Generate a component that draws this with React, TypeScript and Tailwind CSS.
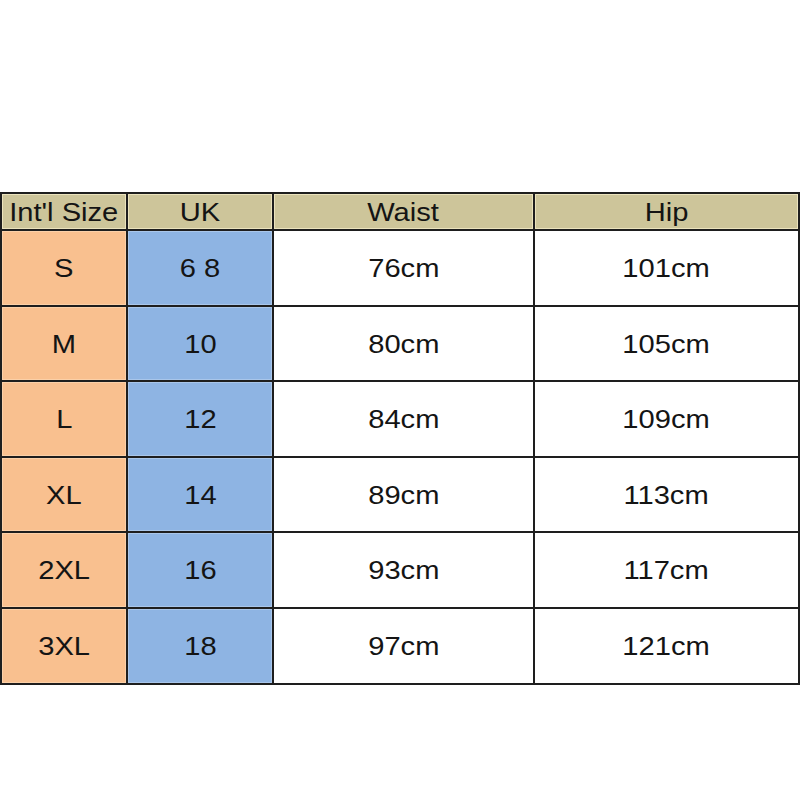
import React from "react";

const rows = [
  ["S", "6 8", "76cm", "101cm"],
  ["M", "10", "80cm", "105cm"],
  ["L", "12", "84cm", "109cm"],
  ["XL", "14", "89cm", "113cm"],
  ["2XL", "16", "93cm", "117cm"],
  ["3XL", "18", "97cm", "121cm"],
];

function Txt({ children }: { children: React.ReactNode }) {
  return (
    <span className="inline-block scale-x-[1.12] text-[26px] leading-none text-[#141414]">
      {children}
    </span>
  );
}

export default function App() {
  return (
    <div className="w-[800px] h-[800px] bg-white pt-[192px] font-['Liberation_Sans',Arial,sans-serif]">
      <div className="grid grid-cols-[124px_144px_259px_263px] grid-rows-[35px_74px_73px_74px_73px_74px_74px] gap-[2px] p-[2px] bg-[#1e1e1e] w-[800px]">
        {["Int'l Size", "UK", "Waist", "Hip"].map((h) => (
          <div
            key={h}
            className="flex items-center justify-center bg-[#cdc59a] border border-[#ebe3bd]"
          >
            <Txt>{h}</Txt>
          </div>
        ))}
        {rows.map((r) => (
          <React.Fragment key={r[0]}>
            <div className="flex items-center justify-center bg-[#f9c08f] border border-[#fbd0a8]">
              <Txt>{r[0]}</Txt>
            </div>
            <div className="flex items-center justify-center bg-[#8eb4e3] border border-[#a9c6ea]">
              <Txt>{r[1]}</Txt>
            </div>
            <div className="flex items-center justify-center bg-white">
              <Txt>{r[2]}</Txt>
            </div>
            <div className="flex items-center justify-center bg-white">
              <Txt>{r[3]}</Txt>
            </div>
          </React.Fragment>
        ))}
      </div>
    </div>
  );
}
